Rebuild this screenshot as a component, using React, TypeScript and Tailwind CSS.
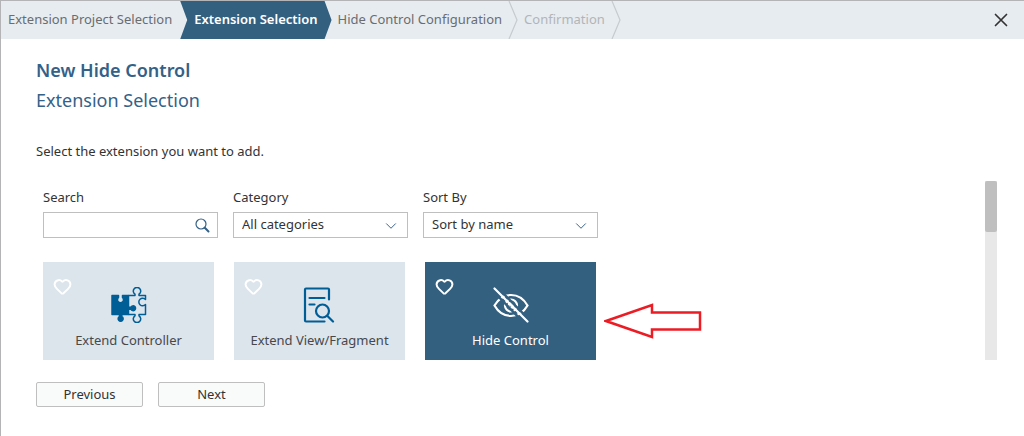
import type { ReactNode } from "react";
import { ChevronDown, Heart } from "lucide-react";
import clsx from "clsx";

const categories = ["All categories"];
const sortOptions = ["Sort by name"];

const extensions = [
  { label: "Extend Controller", icon: PuzzleIcon, selected: false },
  { label: "Extend View/Fragment", icon: ViewIcon, selected: false },
  { label: "Hide Control", icon: HiddenIcon, selected: true },
];

function PuzzleIcon() {
  return (
    <svg width="36" height="36" viewBox="0 0 36 36" fill="none" stroke="currentColor" strokeWidth="1.5" strokeLinejoin="round">
      <path d="M17.5 8.5H24V7.2A3.7 3.7 0 1 1 28 7.2V8.500H34.500V12.500A3.800 3.800 0 1 0 34.500 17.500V27.500H28V28.800A3.700 3.700 0 1 1 24 28.800V27.500H17.500" />
      <path
        fill="currentColor"
        d="M1 8.500H7.500V10.500A3 3 0 1 0 11.500 10.500V8.500H17.500V20.200H20A2.400 2.400 0 1 1 20 22.300H17.500V27.500H10.800V29.500A2.500 2.500 0 1 1 8.500 29.500V27.500H1Z"
      />
    </svg>
  );
}

function ViewIcon() {
  return (
    <svg width="36" height="36" viewBox="0 0 36 36" fill="none" stroke="currentColor" strokeWidth="2.200" strokeLinecap="round" strokeLinejoin="round">
      <path d="M27 12.500V2.500Q27 1.500 26 1.500H4Q3 1.500 3 2.500V33.500Q3 34.500 4 34.500H22.500" />
      <path d="M7.500 11H22.500M7.500 17.500H12.500" />
      <circle cx="20.500" cy="24" r="6.500" />
      <path d="M25.500 29L31 34.500" />
    </svg>
  );
}

function HiddenIcon() {
  return (
    <svg width="36" height="36" viewBox="0 0 36 36" fill="none" stroke="currentColor" strokeWidth="2.200" strokeLinecap="round">
      <path d="M1.500 18.500Q7.500 8 18 8Q28.500 8 34.500 18.500Q28.500 29 18 29Q7.500 29 1.500 18.500Z" />
      <circle cx="18" cy="18.500" r="6" />
      <circle cx="18" cy="18.500" r="2.400" />
      {/* Clears the eye on both sides of the slash */}
      <path d="M2 -2L38 34.500" stroke="#346080" strokeWidth="2.500" />
      <path d="M-1 3L33 38" stroke="#346080" strokeWidth="2.500" />
      <path d="M1.500 1.500L34.500 34.500" />
    </svg>
  );
}

function SearchIcon() {
  return (
    <svg width="15" height="15" viewBox="0 0 15 15" fill="none" stroke="currentColor" strokeLinecap="round">
      <circle cx="6" cy="6" r="5" strokeWidth="1.200" />
      <path d="M9.800 9.800L13.500 13.500" strokeWidth="2" />
    </svg>
  );
}

function StepDivider() {
  return (
    <svg width="10" height="38" viewBox="0 0 10 38" fill="none" stroke="#c6cbcf" strokeWidth="1.200">
      <path d="M1 0L9 19L1 38" />
    </svg>
  );
}

function Field({ id, label, children }: { id: string; label: string; children: ReactNode }) {
  return (
    <div className="w-[175px]">
      <label htmlFor={id} className="block leading-5">{label}</label>
      <div className="relative mt-[5px] text-[#346187]">{children}</div>
    </div>
  );
}

function SelectField({ id, label, options }: { id: string; label: string; options: string[] }) {
  return (
    <Field id={id} label={label}>
      <select id={id} className="block h-[26px] w-full appearance-none border border-[#bfbfbf] bg-white pl-2 pr-8 text-[#333333] outline-none">
        {options.map((option) => (
          <option key={option}>{option}</option>
        ))}
      </select>
      <ChevronDown size={18} strokeWidth={1.3} className="pointer-events-none absolute right-2 top-[5px]" />
    </Field>
  );
}

export default function App() {
  return (
    <div className="min-h-screen border-l border-t border-[#b4b4b6] bg-white font-['Noto_Sans',sans-serif] text-[13px] text-[#333333]">
      {/* Wizard steps */}
      <header className="flex h-[38px] items-center bg-[#e7ecf0] text-[#6a6d70]">
        <nav className="flex h-full grow items-center whitespace-nowrap">
          <a href="#project" className="pl-[7px] pr-2">Extension Project Selection</a>
          <a
            href="#extension"
            aria-current="step"
            className="flex h-full items-center bg-[#346080] px-3.5 font-semibold text-white [clip-path:polygon(0_0,calc(100%-7px)_0,100%_50%,calc(100%-7px)_100%,0_100%,7px_50%)]"
          >
            Extension Selection
          </a>
          <a href="#configuration" className="px-1.5">Hide Control Configuration</a>
          <StepDivider />
          <span className="px-1.5 text-[#b2b5b8]">Confirmation</span>
          <StepDivider />
        </nav>
        <button type="button" aria-label="Close" className="mr-4 text-[#333333]">
          <svg width="14" height="14" viewBox="0 0 14 14" stroke="currentColor" strokeWidth="1.700" strokeLinecap="round">
            <path d="M1.500 1.500L12.500 12.500M12.500 1.500L1.500 12.500" />
          </svg>
        </button>
      </header>

      <main className="pb-7 pl-[35px] pr-[27px] pt-4">
        <h1 className="text-lg font-semibold leading-[30px] text-[#346187]">New Hide Control</h1>
        <h2 className="text-lg leading-[30px] text-[#346187]">Extension Selection</h2>
        <p className="mt-[26px] leading-5">Select the extension you want to add.</p>

        <div className="mt-5 flex justify-between">
          <div className="pl-[7px] pt-[6px]">
            <div className="flex gap-[15px]">
              <Field id="search" label="Search">
                <input id="search" type="text" className="block h-[26px] w-full border border-[#bfbfbf] bg-white pl-2 pr-8 text-[#333333] outline-none" />
                <button type="button" aria-label="Find" className="absolute right-2 top-[6px]">
                  <SearchIcon />
                </button>
              </Field>
              <SelectField id="category" label="Category" options={categories} />
              <SelectField id="sort" label="Sort By" options={sortOptions} />
            </div>

            <div className="mt-6 flex">
              <div className="flex gap-5">
                {extensions.map(({ label, icon: Icon, selected }) => (
                  <button
                    key={label}
                    type="button"
                    aria-pressed={selected}
                    className={clsx(
                      "relative flex h-[98px] w-[171px] flex-col items-center pt-[25px]",
                      selected ? "bg-[#346080] text-white" : "bg-[#dce4ec] text-[#005e96]"
                    )}
                  >
                    <Heart size={19} strokeWidth={2.5} className="absolute left-[10px] top-[15px] text-white" />
                    <Icon />
                    <span className={clsx("mt-[7px] leading-5", !selected && "text-[#46494c]")}>{label}</span>
                  </button>
                ))}
              </div>
              <svg width="98" height="36" viewBox="0 0 98 36" className="ml-2 mt-5 self-center" fill="none" stroke="#ec1c24" strokeWidth="2.500">
                <path d="M2 18L48 2V9.500H96V26.500H48V34Z" />
              </svg>
            </div>
          </div>

          <div className="w-3 bg-[#e8e8e8]">
            <div className="h-[51px] rounded-xs bg-[#bfbfbf]" />
          </div>
        </div>

        <div className="mt-[22px] flex gap-[15px]">
          {["Previous", "Next"].map((label) => (
            <button key={label} type="button" className="h-[25px] w-[107px] rounded-xs border border-[#bfbfbf] bg-[#f9fafa]">
              {label}
            </button>
          ))}
        </div>
      </main>
    </div>
  );
}
